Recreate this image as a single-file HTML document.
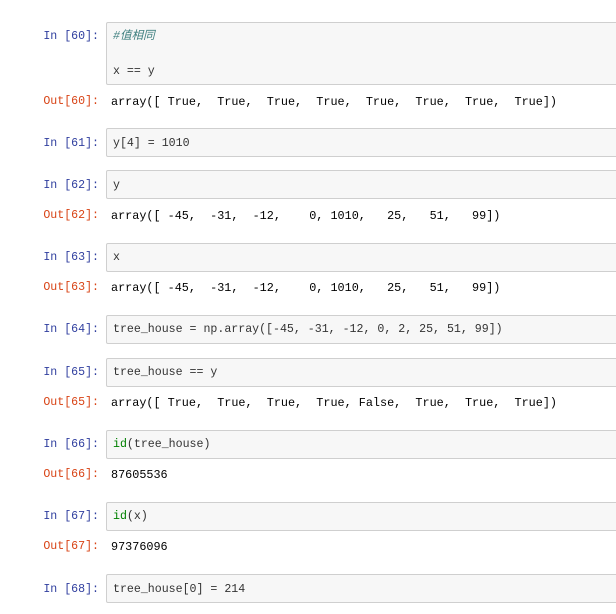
<!DOCTYPE html>
<html><head><meta charset="utf-8"><style>
body{margin:0;width:616px;height:614px;background:#fff;position:relative;overflow:hidden;font-family:"Liberation Mono","Noto Sans CJK SC",monospace;}
.p{position:absolute;right:517px;font-size:11.6px;line-height:16px;white-space:pre;margin-top:1px}
.i{color:#303F9F}.o{color:#D84315}
.b{position:absolute;left:106px;width:520px;background:#f7f7f7;border:1px solid #cfcfcf;border-radius:2px;box-sizing:border-box;}
.t{position:absolute;left:113px;font-size:11.6px;line-height:16px;white-space:pre;color:#333;margin-top:1px}
.r{position:absolute;left:111px;font-size:11.8px;line-height:16px;white-space:pre;color:#000;margin-top:1px}
.g{color:#008000}.c{color:#408080;font-style:italic}
</style></head><body>
<div class="b" style="top:22px;height:63px"></div>
<div class="p i" style="top:28px">In [60]:</div>
<div class="t c" style="top:28px">#值相同</div>
<div class="t" style="top:63px">x == y</div>
<div class="p o" style="top:93px">Out[60]:</div>
<div class="r" style="top:93px">array([ True,  True,  True,  True,  True,  True,  True,  True])</div>

<div class="b" style="top:128px;height:29px"></div>
<div class="p i" style="top:135px">In [61]:</div>
<div class="t" style="top:135px">y[4] = 1010</div>

<div class="b" style="top:170px;height:29px"></div>
<div class="p i" style="top:177px">In [62]:</div>
<div class="t" style="top:177px">y</div>
<div class="p o" style="top:207px">Out[62]:</div>
<div class="r" style="top:207px">array([ -45,  -31,  -12,    0, 1010,   25,   51,   99])</div>

<div class="b" style="top:243px;height:29px"></div>
<div class="p i" style="top:249px">In [63]:</div>
<div class="t" style="top:249px">x</div>
<div class="p o" style="top:279px">Out[63]:</div>
<div class="r" style="top:279px">array([ -45,  -31,  -12,    0, 1010,   25,   51,   99])</div>

<div class="b" style="top:315px;height:29px"></div>
<div class="p i" style="top:321px">In [64]:</div>
<div class="t" style="top:321px">tree_house = np.array([-45, -31, -12, 0, 2, 25, 51, 99])</div>

<div class="b" style="top:358px;height:29px"></div>
<div class="p i" style="top:364px">In [65]:</div>
<div class="t" style="top:364px">tree_house == y</div>
<div class="p o" style="top:394px">Out[65]:</div>
<div class="r" style="top:394px">array([ True,  True,  True,  True, False,  True,  True,  True])</div>

<div class="b" style="top:430px;height:29px"></div>
<div class="p i" style="top:436px">In [66]:</div>
<div class="t" style="top:436px"><span class="g">id</span>(tree_house)</div>
<div class="p o" style="top:466px">Out[66]:</div>
<div class="r" style="top:466px">87605536</div>

<div class="b" style="top:502px;height:29px"></div>
<div class="p i" style="top:508px">In [67]:</div>
<div class="t" style="top:508px"><span class="g">id</span>(x)</div>
<div class="p o" style="top:538px">Out[67]:</div>
<div class="r" style="top:538px">97376096</div>

<div class="b" style="top:574px;height:29px"></div>
<div class="p i" style="top:581px">In [68]:</div>
<div class="t" style="top:581px">tree_house[0] = 214</div>
</body></html>
